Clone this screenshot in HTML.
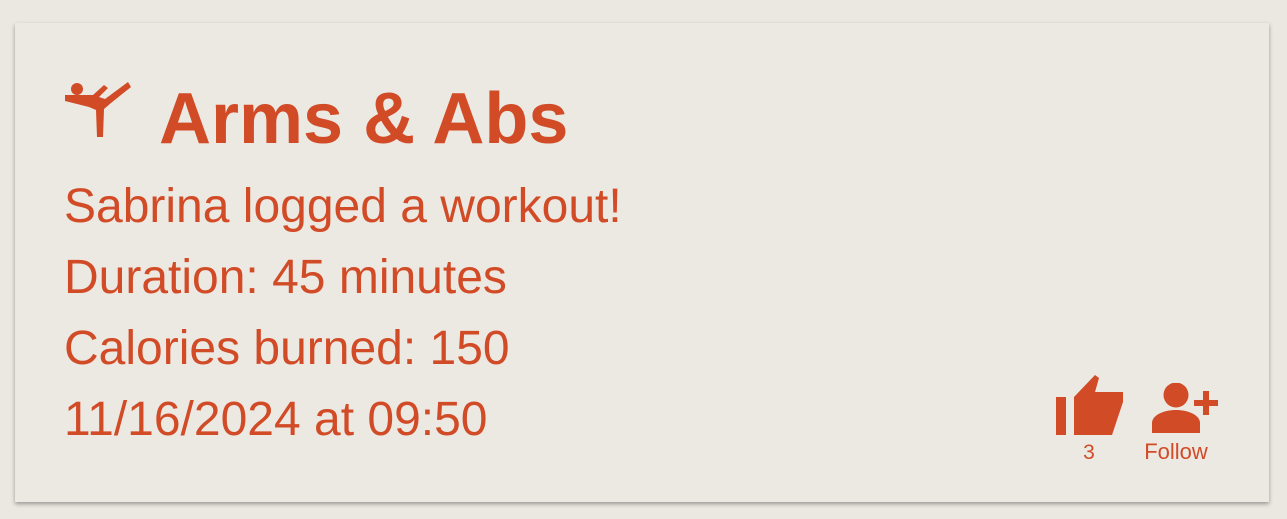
<!DOCTYPE html>
<html><head><style>
html,body{margin:0;padding:0;background:#ebe8e2;width:1287px;height:519px;overflow:hidden;font-family:"Liberation Sans",Arial,sans-serif;color:#d24b27}
.card{position:absolute;left:15px;top:23px;width:1254px;height:479px;background:#ece9e3;box-shadow:0 2px 4px rgba(0,0,0,.35)}
.t{position:absolute;white-space:nowrap;line-height:1}
</style></head><body>
<div class="card"></div>
<svg style="position:absolute;left:65px;top:82px" width="68" height="56" viewBox="0 0 68 56">
<circle cx="12" cy="7" r="6" fill="#d24b27"/>
<path d="M0 13 L28 13 L39 3 L43 6 L34 15 L40 17 L63 0 L66 5 L46 21 L39 27 L38 55 L32 55 L31 28 L24 25 L0 19 Z" fill="#d24b27"/>
</svg>
<div class="t" style="left:159px;top:83px;font-size:72px;font-weight:bold">Arms &amp; Abs</div>
<div class="t" style="left:64px;top:183px;font-size:48px">Sabrina logged a workout!</div>
<div class="t" style="left:64px;top:254px;font-size:48px">Duration: 45 minutes</div>
<div class="t" style="left:64px;top:325px;font-size:48px">Calories burned: 150</div>
<div class="t" style="left:64px;top:396px;font-size:48px">11/16/2024 at 09:50</div>
<svg style="position:absolute;left:1056px;top:375px" width="67" height="60" viewBox="0 0 67 60">
<rect x="0" y="22" width="10" height="38" fill="#d24b27"/>
<path d="M18 60 L18 22 L39 0 L43 3 L39 17 L67 17 L67 27 L56 60 Z" fill="#d24b27"/>
</svg>
<svg style="position:absolute;left:1152px;top:383px" width="67" height="50" viewBox="0 0 67 50">
<circle cx="24" cy="12" r="12.5" fill="#d24b27"/>
<path d="M0 50 L0 40 C0 32 12 27 24 27 C36 27 48 32 48 40 L48 50 Z" fill="#d24b27"/>
<rect x="42" y="17" width="24" height="6" fill="#d24b27"/>
<rect x="51" y="8" width="6" height="24" fill="#d24b27"/>
</svg>
<div class="t" style="left:1069px;top:442px;width:40px;text-align:center;font-size:21px">3</div>
<div class="t" style="left:1131px;top:441px;width:90px;text-align:center;font-size:22px">Follow</div>
</body></html>
